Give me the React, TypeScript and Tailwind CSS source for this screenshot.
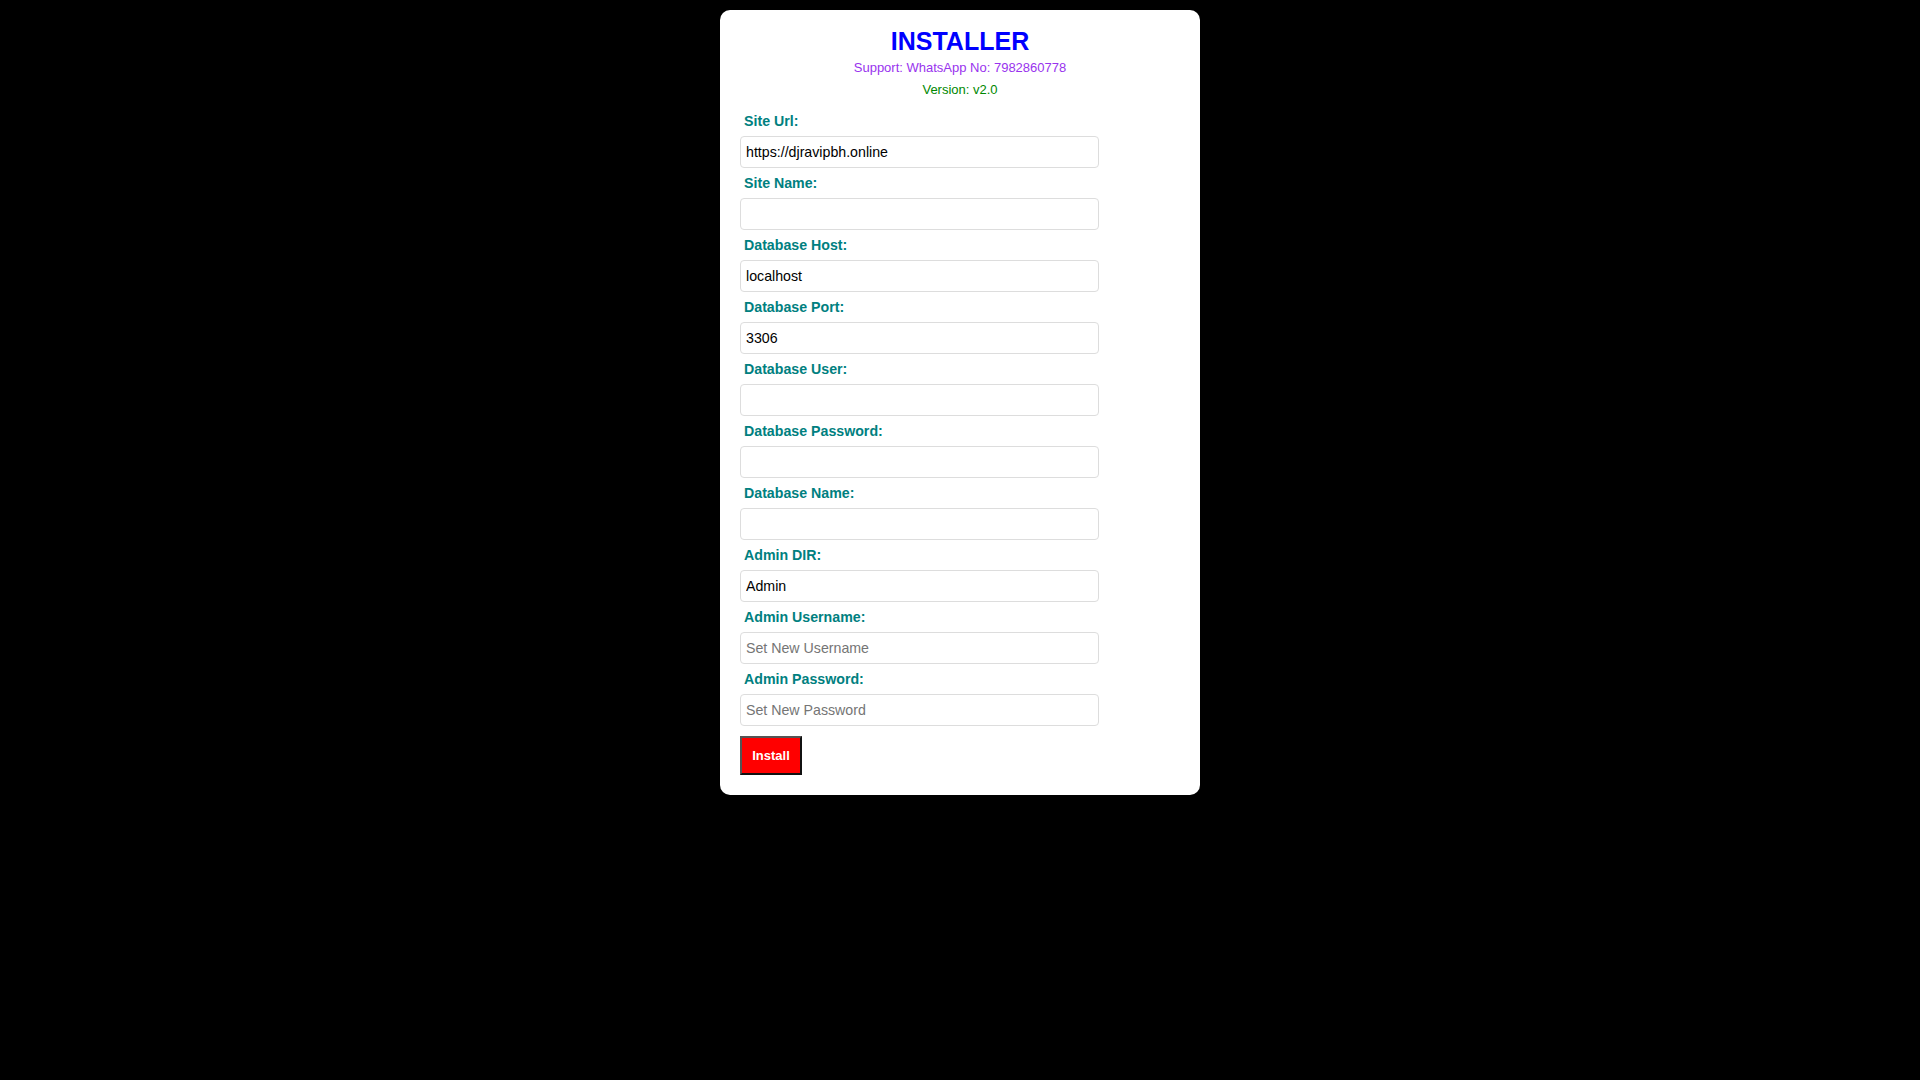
const fields: { label: string; value?: string; placeholder?: string; type?: string }[] = [
  { label: 'Site Url:', value: 'https://djravipbh.online' },
  { label: 'Site Name:' },
  { label: 'Database Host:', value: 'localhost' },
  { label: 'Database Port:', value: '3306' },
  { label: 'Database User:' },
  { label: 'Database Password:', type: 'password' },
  { label: 'Database Name:' },
  { label: 'Admin DIR:', value: 'Admin' },
  { label: 'Admin Username:', placeholder: 'Set New Username' },
  { label: 'Admin Password:', placeholder: 'Set New Password', type: 'password' },
];

export default function App() {
  return (
    <div className="min-h-screen bg-black pt-[10px] font-['Liberation_Sans',Arial,sans-serif]">
      <div className="mx-auto w-[480px] rounded-[10px] bg-white px-5 pt-[17px] pb-5">
        <h2 className="h-[28px] text-center text-[25px] font-bold leading-[28px] text-[#0000ff]">INSTALLER</h2>
        <p className="mt-[2px] text-center text-[13px] leading-[22px] text-[#9933ee]">
          Support: WhatsApp No: 7982860778
        </p>
        <p className="text-center text-[13px] leading-[22px] text-[#008800]">Version: v2.0</p>

        <form className="mt-[5px]" onSubmit={(e) => e.preventDefault()}>
          {fields.map((f) => (
            <div key={f.label} className="pt-[5px]">
              <label className="block h-5 pl-1 text-[14.2px] font-bold leading-5 text-[#008080]">{f.label}</label>
              <input
                type={f.type ?? 'text'}
                defaultValue={f.value}
                placeholder={f.placeholder}
                className="mt-[5px] block h-8 w-[359px] rounded-[4px] border border-[#dddddd] bg-white px-[5px] text-[14.2px] text-black outline-none placeholder:text-[#757575]"
              />
            </div>
          ))}

          <button
            type="submit"
            className="mt-[10px] h-[39px] w-[62px] border-2 border-t-[#555555] border-l-[#555555] border-r-[#111111] border-b-[#111111] bg-[#ff0000] text-[13px] font-bold text-white"
          >
            Install
          </button>
        </form>
      </div>
    </div>
  );
}
